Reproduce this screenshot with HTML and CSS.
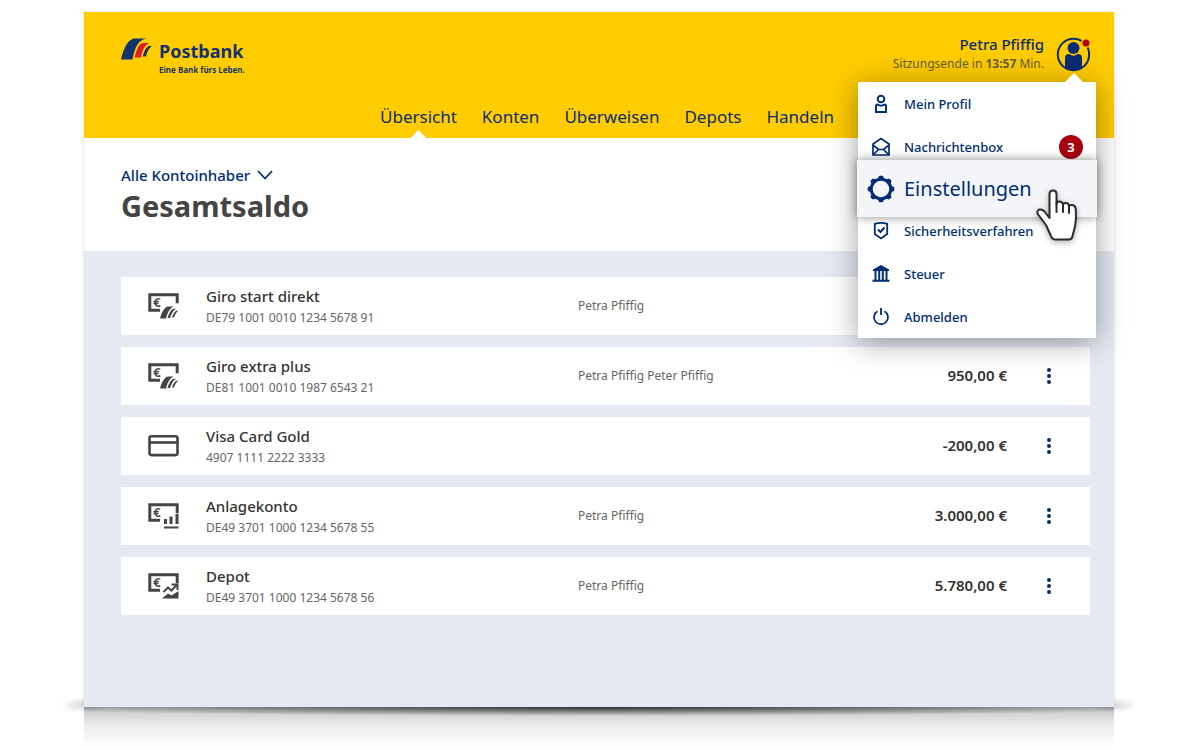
FILE: index.html
```html
<!DOCTYPE html>
<html lang="de">
<head>
<meta charset="utf-8">
<meta name="viewport" content="width=device-width, initial-scale=1">
<title>Postbank – Gesamtsaldo</title>
<link rel="stylesheet" href="styles.css">
</head>
<body>
<svg class="sprite" aria-hidden="true">
  <symbol id="note" viewBox="0 0 31 26">
    <path d="M12 17.2H1.8V1.8h27.4v8.4" fill="none" stroke="currentColor" stroke-width="3"/>
    <path d="M12.3 6.1C8.500 4.600 7.300 7 7.300 9.500s1.400 5 5 3.300M5.500 8.600h5.300M5.500 10.600h5" fill="none" stroke="currentColor" stroke-width="1.500"/>
  </symbol>
  <symbol id="giro" viewBox="0 0 31 26">
    <use href="#note"/>
    <path d="M12 25.500C14 18 17 14 20 13.500h5.500C21 16 19.500 20 18 25.500zM19.500 25C21 19.500 23 16.500 25.500 15.700H28C24.500 18 23.500 21 22 25zM24 24.500C25 21 26.500 18.500 28.200 17.700h2C28 19.500 27 21.500 25.900 24.500z" fill="currentColor"/>
  </symbol>
</svg>

<div class="window">
  <header class="header">
    <div class="topbar">
      <a class="logo" href="#">
        <svg class="logo-mark" viewBox="0 0 31 22" aria-hidden="true">
          <path fill="#14326b" d="M0 21.500C3 8 8 .5 14 .5H25.500C17 2 14 9 11.500 21.500Z"/>
          <path fill="#dc1f2a" d="M13.500 19.500C16 10 18.500 6 21.500 5H28C23 8 21.500 12 20 19.500Z"/>
          <path fill="#14326b" d="M21.800 18.500C23.500 12 25.500 9 28 8h3C28 10 26.500 13 25 18.500Z"/>
        </svg>
        <span class="logo-text">
          <span class="logo-name">Postbank</span>
          <span class="logo-claim">Eine Bank fürs Leben.</span>
        </span>
      </a>
      <div class="user">
        <div class="user-text">
          <div class="user-name">Petra Pfiffig</div>
          <div class="session">Sitzungsende in <b>13:57</b> Min.</div>
        </div>
        <button class="avatar" type="button" aria-label="Benutzermenü" aria-expanded="true">
          <svg viewBox="0 0 36 36" aria-hidden="true">
            <circle cx="17.500" cy="18.500" r="15.700" fill="none" stroke="#0c2c73" stroke-width="2"/>
            <circle cx="17.500" cy="12" r="6" fill="#0c2c73"/>
            <path d="M9 31V22q0-4 4-4 1 0 2 1 2.500 1.600 5 0 1-1 2-1 4 0 4 4v9q-3.500 3.500-8.500 3.500T9 31z" fill="#0c2c73"/>
            <circle cx="30" cy="7" r="5" fill="#fc0"/>
            <circle cx="30" cy="7" r="3.500" fill="#b1000e"/>
          </svg>
        </button>
      </div>
    </div>
    <nav class="nav">
      <a class="active" href="#">Übersicht</a>
      <a href="#">Konten</a>
      <a href="#">Überweisen</a>
      <a href="#">Depots</a>
      <a href="#">Handeln</a>
    </nav>
  </header>

  <section class="title">
    <button class="filter" type="button">Alle Kontoinhaber
      <svg viewBox="0 0 16 10" aria-hidden="true"><path d="M1 1l7 7.500L15 1" fill="none" stroke="currentColor" stroke-width="1.800"/></svg>
    </button>
    <h1>Gesamtsaldo</h1>
  </section>

  <main class="content">
    <ul class="accounts">
      <li class="account">
        <svg class="account-icon" viewBox="0 0 31 26" aria-hidden="true"><use href="#giro"/></svg>
        <div><div class="account-name">Giro start direkt</div><div class="account-number">DE79 1001 0010 1234 5678 91</div></div>
        <div class="owner">Petra Pfiffig</div>
      </li>
      <li class="account">
        <svg class="account-icon" viewBox="0 0 31 26" aria-hidden="true"><use href="#giro"/></svg>
        <div><div class="account-name">Giro extra plus</div><div class="account-number">DE81 1001 0010 1987 6543 21</div></div>
        <div class="owner">Petra Pfiffig Peter Pfiffig</div>
        <div class="amount">950,00 €</div>
        <button class="more" type="button" aria-label="Optionen"><i></i><i></i><i></i></button>
      </li>
      <li class="account">
        <svg class="account-icon" viewBox="0 0 31 26" aria-hidden="true"><rect x="1.500" y="3.300" width="28" height="18.800" rx="2" fill="none" stroke="currentColor" stroke-width="2.600"/><path d="M1 9.500h29" stroke="currentColor" stroke-width="2.600"/></svg>
        <div><div class="account-name">Visa Card Gold</div><div class="account-number">4907 1111 2222 3333</div></div>
        <div class="owner"></div>
        <div class="amount">-200,00 €</div>
        <button class="more" type="button" aria-label="Optionen"><i></i><i></i><i></i></button>
      </li>
      <li class="account">
        <svg class="account-icon" viewBox="0 0 31 26" aria-hidden="true"><use href="#note"/><path d="M16 16h3v5h-3zM21.500 13.500h3V21h-3zM27.500 11h3v10h-3zM16 23.500h14.500v2H16z" fill="currentColor"/></svg>
        <div><div class="account-name">Anlagekonto</div><div class="account-number">DE49 3701 1000 1234 5678 55</div></div>
        <div class="owner">Petra Pfiffig</div>
        <div class="amount">3.000,00 €</div>
        <button class="more" type="button" aria-label="Optionen"><i></i><i></i><i></i></button>
      </li>
      <li class="account">
        <svg class="account-icon" viewBox="0 0 31 26" aria-hidden="true"><use href="#note"/><path d="M15.500 19l4.500-4.500 3.500 3 5.500-6M23.500 11.500H29.500V17" fill="none" stroke="currentColor" stroke-width="2"/><path d="M14 25.500l6-5 3.500 2 7-4.500v7.500z" fill="currentColor"/></svg>
        <div><div class="account-name">Depot</div><div class="account-number">DE49 3701 1000 1234 5678 56</div></div>
        <div class="owner">Petra Pfiffig</div>
        <div class="amount">5.780,00 €</div>
        <button class="more" type="button" aria-label="Optionen"><i></i><i></i><i></i></button>
      </li>
    </ul>
  </main>

  <div class="menu">
    <a href="#"><svg viewBox="0 0 20 20" aria-hidden="true"><g fill="none" stroke="currentColor" stroke-width="2"><circle cx="10" cy="5" r="3.300"/><path d="M5 18v-6q0-1.500 1.800-1.500Q10 13 13.200 10.500 15 10.500 15 12v6z"/></g></svg>Mein Profil</a>
    <a href="#"><svg viewBox="0 0 20 20" aria-hidden="true"><g fill="none" stroke="currentColor" stroke-width="1.700"><path d="M2 18V7l8-5.500L18 7v11z"/><path d="M2 8l5.500 4.500h5L18 8M2 18l5.500-5.500M18 18l-5.500-5.500"/></g></svg>Nachrichtenbox<span class="badge">3</span></a>
    <a class="highlight" href="#"><svg viewBox="0 0 28 28" aria-hidden="true"><circle cx="14" cy="14" r="9.800" fill="none" stroke="currentColor" stroke-width="3"/><g fill="currentColor"><path id="tooth" d="M10.500 5l1.300-3.400q.4-.9 1.200-.9h2q.8 0 1.200.9L17.500 5z"/><use href="#tooth" transform="rotate(45 14 14)"/><use href="#tooth" transform="rotate(90 14 14)"/><use href="#tooth" transform="rotate(135 14 14)"/><use href="#tooth" transform="rotate(180 14 14)"/><use href="#tooth" transform="rotate(225 14 14)"/><use href="#tooth" transform="rotate(270 14 14)"/><use href="#tooth" transform="rotate(315 14 14)"/></g></svg>Einstellungen</a>
    <a href="#"><svg viewBox="0 0 20 20" aria-hidden="true"><g fill="none" stroke="currentColor" stroke-width="1.800"><path d="M3.800 2.800Q10 .8 16.200 2.800V13L10 17.500 3.800 13z"/><path d="M7 8.500l2.500 2.500 4-4.500" stroke-width="2"/></g></svg>Sicherheitsverfahren</a>
    <a href="#"><svg viewBox="0 0 20 20" aria-hidden="true"><path d="M2 5.500L10 1l8 4.500V7H2zM3.500 7h2v9h-2zM7.200 7h2v9h-2zM10.800 7h2v9h-2zM14.500 7h2v9h-2zM1.500 15.800h17v2h-17z" fill="currentColor"/></svg>Steuer</a>
    <a href="#"><svg viewBox="0 0 20 20" aria-hidden="true"><path d="M6.500 4.200a7 7 0 1 0 7 0M10 1v7" fill="none" stroke="currentColor" stroke-width="1.800"/></svg>Abmelden</a>
    <svg class="cursor" viewBox="0 0 44 54" aria-hidden="true"><path d="M13.500 30V6q0-3.500 3.500-3.500T20.500 6v10q0-2.500 3-2.500t3.500 3q.5-1.500 3-1.500t3 3q.5-1 2.500-1 4 0 4.300 4.500.8 8-.8 17L36.500 48q-.5 3.500-4 3.500H19q-3 0-4.500-4.500L10 37 1.800 26q-1.300-3.700 1.700-4.500 2.500-.5 5 2z" fill="#fff" stroke="#2b2b2b" stroke-width="2" stroke-linejoin="round"/><path d="M20.500 15v9M27 16v8M33 18v7" fill="none" stroke="#2b2b2b" stroke-width="2" stroke-linecap="round"/></svg>
  </div>
</div>
<div class="floor"></div>
</body>
</html>
```
FILE: styles.css
```css
* { box-sizing: border-box; }

body {
  margin: 0;
  padding: 12px 86px 0 84px;
  background: #fff;
  color: #333;
  font-family: "Noto Sans", "Open Sans", sans-serif;
  font-size: 13px;
  line-height: 20px;
}

a { color: inherit; text-decoration: none; }

button {
  border: 0;
  padding: 0;
  background: none;
  color: inherit;
  font: inherit;
  cursor: pointer;
}

svg { display: block; flex: none; }
.sprite { position: absolute; width: 0; height: 0; }

.window {
  position: relative;
  z-index: 1;
  background: #fff;
  box-shadow: 0 0 3px rgba(0, 0, 0, .15);
}

/* Header */
.header {
  padding: 21px 22px 0 37px;
  background: #fc0;
  color: #0c2c73;
}

.topbar {
  display: flex;
  justify-content: space-between;
  align-items: flex-start;
  height: 72px;
}

.logo { display: flex; gap: 7px; padding-top: 5px; color: #14326b; }
.logo-mark { width: 31px; height: 22px; }
.logo-text { display: flex; flex-direction: column; font-weight: 700; }
.logo-name { font-size: 18px; line-height: 26px; }
.logo-claim { font-size: 8px; line-height: 12px; }

.user { display: flex; gap: 12px; }
.user-text { padding-top: 1px; text-align: right; }
.user-name { font-size: 15px; font-weight: 500; }
.session { font-size: 12px; color: #66603f; }
.avatar svg { width: 36px; height: 36px; }

.nav {
  display: flex;
  gap: 25px;
  padding-left: 259px;
  font-size: 17px;
  line-height: 24px;
}
.nav a { position: relative; padding-bottom: 9px; }
.nav .active::after {
  content: "";
  position: absolute;
  left: 50%;
  bottom: 0;
  width: 16px;
  height: 8px;
  margin-left: -8px;
  background: #fff;
  clip-path: polygon(50% 0, 100% 100%, 0 100%);
}

/* Title */
.title { padding: 27px 37px 24px; }
.filter {
  display: flex;
  align-items: center;
  gap: 7px;
  color: #002d74;
  font-size: 15px;
  font-weight: 500;
}
.filter svg { width: 16px; height: 10px; }
h1 {
  margin: 0;
  color: #444;
  font-size: 29px;
  line-height: 42px;
}

/* Accounts */
.content {
  min-height: 456px;
  padding: 26px 24px 26px 37px;
  background: #e5eaf2;
}
.accounts {
  display: flex;
  flex-direction: column;
  gap: 12px;
  margin: 0;
  padding: 0;
  list-style: none;
}
.account {
  display: grid;
  grid-template-columns: 58px 372px 1fr auto 83px;
  align-items: center;
  min-height: 58px;
  padding-left: 27px;
  background: #fff;
}
.account-icon { width: 31px; height: 26px; color: #444; }
.account-name { font-size: 15px; font-weight: 500; line-height: 24px; }
.account-number { font-size: 12px; color: #666; }
.owner { font-size: 12px; color: #666; }
.amount { padding-bottom: 2px; font-size: 15px; font-weight: 600; }
.more {
  display: flex;
  flex-direction: column;
  align-items: center;
  justify-self: center;
  gap: 2px;
  padding: 4px;
}
.more i { width: 4px; height: 4px; border-radius: 50%; background: #002d74; }

/* User menu */
.menu {
  position: absolute;
  top: 70px;
  right: 18px;
  width: 238px;
  background: #fff;
  box-shadow: 0 4px 28px rgba(0, 0, 0, .38);
  color: #002d74;
  font-weight: 500;
}
.menu::before {
  content: "";
  position: absolute;
  right: 12px;
  top: -9px;
  width: 20px;
  height: 10px;
  background: #fff;
  clip-path: polygon(50% 0, 100% 100%, 0 100%);
}
.menu a {
  display: flex;
  align-items: center;
  gap: 13px;
  height: 43px;
  padding: 0 13px;
}
.menu a svg { width: 20px; height: 20px; }
.badge {
  width: 24px;
  margin-left: auto;
  border-radius: 12px;
  background: #a8000f;
  color: #fff;
  font-weight: 700;
  line-height: 24px;
  text-align: center;
}
.menu .highlight {
  position: relative;
  gap: 9px;
  height: 57px;
  margin: -8px -1px;
  padding: 0 10px;
  background: #f3f5f9;
  box-shadow: 0 0 10px rgba(0, 0, 0, .45);
  font-size: 20px;
  font-weight: 400;
}
.menu .highlight svg { width: 28px; height: 28px; }
.cursor {
  position: absolute;
  top: 106px;
  right: 16px;
  width: 44px;
  height: 54px;
  filter: drop-shadow(0 2px 3px rgba(0, 0, 0, .3));
}

/* Reflection under the window */
.floor {
  position: relative;
  height: 40px;
  background:
    radial-gradient(60% 9px at 50% 0, rgba(0, 0, 0, .75), transparent),
    linear-gradient(rgba(60, 65, 75, .3), rgba(60, 65, 75, .1) 45%, transparent);
}
.floor::before {
  content: "";
  position: absolute;
  top: -10px;
  left: -24px;
  right: -24px;
  height: 16px;
  background:
    radial-gradient(24px 8px at 24px 50%, rgba(0, 0, 0, .15), transparent),
    radial-gradient(24px 8px at calc(100% - 24px) 50%, rgba(0, 0, 0, .15), transparent);
}
```
